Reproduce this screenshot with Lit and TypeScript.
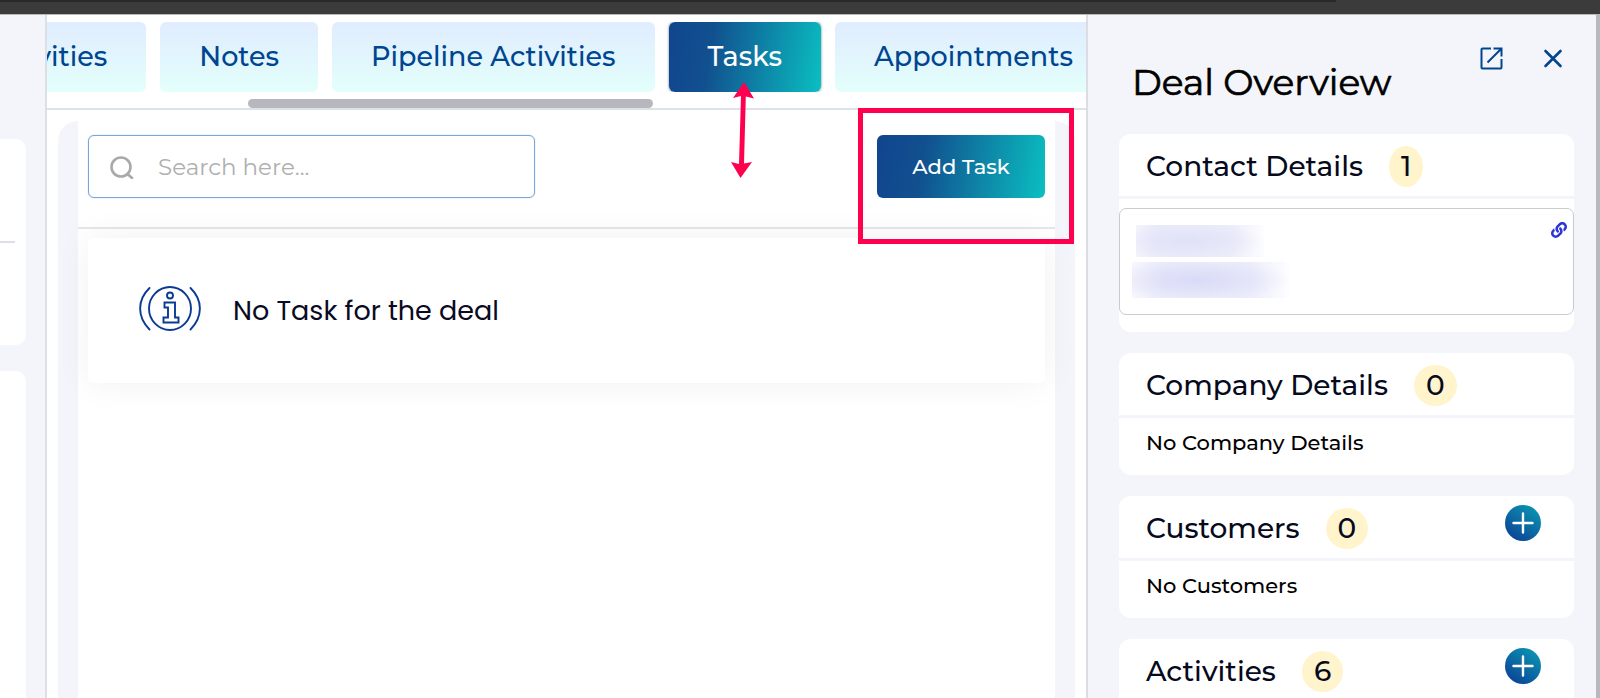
import { LitElement, html, css, svg, nothing } from "lit";
import { customElement, property, query } from "lit/decorators.js";
import { classMap } from "lit/directives/class-map.js";

const plusIcon = svg`<path d="M18 8.5v19M8.5 18h19" fill="none" stroke="#fff" stroke-width="2.4" stroke-linecap="round"/>`;

const chainHalf =
  "M326.612 185.391c59.747 59.809 58.927 155.698.36 214.59-.11.12-.24.25-.36.37l-67.2 67.2c-59.27 59.27-155.699 59.262-214.96 0-59.27-59.26-59.27-155.7 0-214.96l37.106-37.106c9.84-9.84 26.786-3.3 27.294 10.606.648 17.722 3.826 35.527 9.69 52.721 1.986 5.822.567 12.262-3.783 16.612l-13.087 13.087c-28.026 28.026-28.905 73.66-1.155 101.96 28.024 28.579 74.086 28.749 102.325.51l67.2-67.19c28.191-28.191 28.073-73.757 0-101.83-3.701-3.694-7.429-6.564-10.341-8.569a16.037 16.037 0 0 1-6.947-12.606c-.396-10.567 3.348-21.456 11.698-29.806l21.054-21.055c5.521-5.521 14.182-6.199 20.584-1.731a152.482 152.482 0 0 1 20.522 17.197z";

@customElement("deal-tabs")
class DealTabs extends LitElement {
  @property({ attribute: false }) tabs: string[] = [];
  @property() active = "";
  @query(".strip") strip!: HTMLElement;

  static styles = css`
    :host {
      display: block;
      border-bottom: 2px solid #dde1e8;
      padding-top: 7px;
    }
    .strip {
      display: flex;
      gap: 14px;
      overflow: hidden;
    }
    .tab {
      flex: none;
      height: 70px;
      padding: 0 39px;
      border: 0;
      border-radius: 6px;
      background: linear-gradient(#e0ecff, #e3fffb);
      color: #004590;
      font: 500 27px/32px Montserrat, Inter, sans-serif;
    }
    .active {
      background: linear-gradient(100deg, #11458f 0%, #11508f 28%, #0abfc1 100%);
      color: #fff;
      box-shadow: 0 0 2px 1px rgba(60, 80, 90, 0.35);
    }
    .track {
      padding-top: 7px;
    }
    .thumb {
      height: 9px;
      width: 39%;
      margin-left: 19.3%;
      border-radius: 5px;
      background: #b8b7be;
    }
  `;

  firstUpdated() {
    const second = this.strip.children[1] as HTMLElement;
    this.strip.scrollLeft = second.offsetLeft - this.strip.offsetLeft - 113;
  }

  render() {
    return html`
      <div class="strip" role="tablist">
        ${this.tabs.map(
          (t) => html`<button
            role="tab"
            aria-selected=${t === this.active}
            class=${classMap({ tab: true, active: t === this.active })}
          >${t}</button>`
        )}
      </div>
      <div class="track"><div class="thumb"></div></div>
    `;
  }
}

@customElement("detail-card")
class DetailCard extends LitElement {
  @property() heading = "";
  @property({ type: Number }) count = 0;
  @property({ type: Boolean }) addable = false;

  static styles = css`
    :host {
      display: block;
      background: #fff;
      border-radius: 12px;
    }
    .head {
      display: flex;
      align-items: flex-start;
      padding: 9px 33px 9px 27px;
      border-bottom: 3px solid #f4f5fa;
    }
    .title {
      display: flex;
      flex: 1;
      gap: 26px;
      margin: 0;
      padding-top: 3px;
      color: #060a1c;
      font: 500 28px/41px Montserrat, Inter, sans-serif;
    }
    .count {
      padding: 0 12px;
      border-radius: 50%;
      background: #fff4cc;
    }
    .add {
      width: 36px;
      height: 36px;
      padding: 0;
      border: 0;
      border-radius: 50%;
      background: linear-gradient(35deg, #0c4396 10%, #0a8fb0 85%);
    }
    .add svg {
      display: block;
    }
  `;

  render() {
    return html`
      <div class="head">
        <h2 class="title">${this.heading}<span class="count">${this.count}</span></h2>
        ${this.addable
          ? html`<button class="add" aria-label="Add ${this.heading}">
              <svg width="36" height="36" viewBox="0 0 36 36">${plusIcon}</svg>
            </button>`
          : nothing}
      </div>
      <slot></slot>
    `;
  }
}

@customElement("app-root")
class AppRoot extends LitElement {
  static styles = css`
    :host {
      display: flex;
      flex-direction: column;
      position: relative;
      height: 100vh;
      overflow: hidden;
      background: #fff;
      color: #000;
      font-family: Montserrat, Inter, sans-serif;
    }
    * {
      box-sizing: border-box;
    }
    .chrome {
      flex: none;
      height: 15px;
      border-bottom: 1px solid #b9b9b9;
      background: linear-gradient(#292929, #292929) 0 0 / 83.5% 2px no-repeat,
        #3b3b3b;
    }
    .layout {
      flex: 1;
      min-height: 0;
      display: grid;
      grid-template-columns: 47px minmax(0, 1fr) 514px;
    }
    .left {
      display: flex;
      flex-direction: column;
      gap: 26px;
      padding: 124px 19px 0 0;
      background: #f4f5fa;
      border-right: 2px solid #dcdfe6;
    }
    .left-card {
      background: #fff;
      border-radius: 0 10px 10px 0;
      height: 206px;
      padding: 102px 11px 0 0;
    }
    .left-card.rest {
      flex: 1;
      height: auto;
      border-radius: 0 10px 0 0;
    }
    .rule {
      margin: 0;
      border: 0;
      border-top: 2px solid #dcdfe6;
    }
    .center {
      display: flex;
      flex-direction: column;
      min-width: 0;
    }
    .panel {
      flex: 1;
      margin: 11px 11px 0;
      padding: 0 20px;
      border-radius: 20px 20px 0 0;
      background: #f4f5fa;
    }
    .sheet {
      height: 100%;
      background: #fff;
    }
    .tools {
      display: flex;
      justify-content: space-between;
      padding: 14px 10px 29px;
      border-bottom: 2px solid #e6e6e9;
    }
    .search {
      display: flex;
      align-items: center;
      gap: 24px;
      width: 447px;
      height: 63px;
      padding: 0 21px;
      border: 1px solid #78a6d8;
      border-radius: 6px;
      box-shadow: 0 0 1px #78a6d8;
    }
    .search svg {
      flex: none;
    }
    .search input {
      flex: 1;
      min-width: 0;
      padding: 0;
      border: 0;
      outline: 0;
      background: none;
      font: 400 23px/28px Montserrat, Inter, sans-serif;
    }
    .search input::placeholder {
      color: #afafaf;
      opacity: 1;
    }
    .primary {
      width: 168px;
      border: 0;
      border-radius: 6px;
      background: linear-gradient(100deg, #11458f 0%, #11508f 28%, #0abfc1 100%);
      color: #fff;
      font: 500 21px/26px Montserrat, Inter, sans-serif;
    }
    .empty {
      display: flex;
      align-items: center;
      gap: 32px;
      height: 145px;
      margin: 9px 10px 0;
      padding: 0 51px;
      border-radius: 5px;
      background: #fff;
      box-shadow: 0 0 36px rgba(20, 10, 40, 0.06);
      color: #0a0a24;
      font: 400 27px/32px Poppins, Inter, sans-serif;
    }
    .right {
      display: flex;
      flex-direction: column;
      gap: 21px;
      min-height: 0;
      overflow: hidden;
      padding: 0 22px 0 31px;
      background: #f4f5fa;
      border-left: 2px solid #dcdde2;
      border-right: 4px solid #b9b9bd;
    }
    .top {
      flex: none;
      display: flex;
      align-items: flex-start;
      height: 98px;
      padding: 31px 9px 0 13px;
    }
    .heading {
      flex: 1;
      margin: 0;
      padding-top: 14px;
      font: 400 36px/44px Montserrat, Inter, sans-serif;
      -webkit-text-stroke: 0.7px #000;
    }
    .actions {
      display: flex;
      gap: 38px;
    }
    .icon {
      padding: 0;
      border: 0;
      background: none;
    }
    .icon svg {
      display: block;
    }
    detail-card {
      flex: none;
    }
    .note {
      margin: 0;
      padding: 12px 27px 19px;
      font: 500 21px/26px Montserrat, Inter, sans-serif;
    }
    .contact {
      display: flex;
      justify-content: space-between;
      align-items: flex-start;
      height: 107px;
      margin: 9px 0 0;
      padding: 13px 6px 0 12px;
      border: 1px solid #cbcbcb;
      border-radius: 7px;
    }
    .contact-wrap {
      padding-bottom: 17px;
    }
    .hidden-text {
      display: grid;
      gap: 5px;
      padding-top: 3px;
    }
    .smudge {
      height: 32px;
      width: 128px;
      margin-left: 4px;
      background: radial-gradient(60% 60% at 40% 50%, #dfe1f7, transparent),
        linear-gradient(90deg, #f4f4fc, #ebecfa 15%, #ecedfa 75%, #fdfdff);
    }
    .smudge.wide {
      height: 36px;
      width: 158px;
      margin-left: 0;
      background: radial-gradient(60% 60% at 40% 50%, #d9daf7, transparent),
        linear-gradient(90deg, #f8f8fd, #ebecfa 20%, #ecedfa 75%, #fefeff);
    }
    .marks {
      position: absolute;
      inset: 0;
      pointer-events: none;
    }
    .arrow {
      position: absolute;
      left: 730px;
      top: 81px;
    }
    .box {
      position: absolute;
      left: 858px;
      top: 108px;
      width: 216px;
      height: 136px;
      border: 5px solid #ff004f;
    }
  `;

  render() {
    return html`
      <div class="chrome"></div>
      <div class="layout">
        <aside class="left">
          <div class="left-card"><hr class="rule" /></div>
          <div class="left-card rest"></div>
        </aside>

        <main class="center">
          <deal-tabs
            .tabs=${["Activities", "Notes", "Pipeline Activities", "Tasks", "Appointments"]}
            active="Tasks"
          ></deal-tabs>
          <div class="panel">
            <div class="sheet">
              <div class="tools">
                <label class="search">
                  <svg width="24" height="24" viewBox="0 0 24 24" fill="none" stroke="#a9a9a9" stroke-width="2.6" stroke-linecap="round" aria-hidden="true">
                    <circle cx="11" cy="12" r="9.5" />
                    <path d="M17.5 19l4.500 4" />
                  </svg>
                  <input type="search" placeholder="Search here..." aria-label="Search" />
                </label>
                <button class="primary">Add Task</button>
              </div>
              <div class="empty">
                <svg width="62" height="50" viewBox="0 0 62 50" fill="none" stroke="#0b3a92" stroke-width="1.9" stroke-linecap="round" aria-hidden="true">
                  <ellipse cx="31" cy="22.500" rx="21" ry="21.500" />
                  <path d="M10.500 2C-2 14-2 31 10.500 43.500M51.500 2C64 14 64 31 51.500 43.500" />
                  <circle cx="31" cy="9.500" r="3" />
                  <path d="M25.500 16.500H36V31.500H39.500V36.500H24.500V31.500H29V21.500H25.500Z" />
                </svg>
                <span>No Task for the deal</span>
              </div>
            </div>
          </div>
        </main>

        <aside class="right">
          <header class="top">
            <h1 class="heading">Deal Overview</h1>
            <div class="actions">
              <button class="icon" aria-label="Open in new window">
                <svg width="24" height="24" viewBox="0 0 24 24" fill="none" stroke="#00458f" stroke-width="2">
                  <path d="M12 2.500H3.500a1 1 0 0 0-1 1V21.500a1 1 0 0 0 1 1H21.500a1 1 0 0 0 1-1V13" />
                  <path d="M14.500 2.500H22.500V10.500M22 3L8.500 16.500" />
                </svg>
              </button>
              <button class="icon" aria-label="Close">
                <svg width="24" height="24" viewBox="0 0 24 24" fill="none" stroke="#00458f" stroke-width="2.600" stroke-linecap="round">
                  <path d="M4.500 5L19.500 20M19.500 5L4.500 20" />
                </svg>
              </button>
            </div>
          </header>

          <detail-card heading="Contact Details" .count=${1}>
            <div class="contact-wrap">
              <div class="contact">
                <div class="hidden-text">
                  <div class="smudge"></div>
                  <div class="smudge wide"></div>
                </div>
                <button class="icon" aria-label="Copy link">
                  <svg width="16" height="16" viewBox="0 0 512 512" fill="#2b35d8">
                    <path d=${chainHalf} />
                    <path d=${chainHalf} transform="rotate(180 256 256)" />
                  </svg>
                </button>
              </div>
            </div>
          </detail-card>
          <detail-card heading="Company Details" .count=${0}>
            <p class="note">No Company Details</p>
          </detail-card>
          <detail-card heading="Customers" .count=${0} addable>
            <p class="note">No Customers</p>
          </detail-card>
          <detail-card heading="Activities" .count=${6} addable>
            <p class="note">&nbsp;</p>
          </detail-card>
        </aside>
      </div>

      <div class="marks">
        <svg class="arrow" width="26" height="98" viewBox="0 0 26 98" fill="#ff004f" aria-hidden="true">
          <path d="M14 1L24 17.500L15.800 15.500L14 82.500L22 81L10.500 97L1 81L9 83L11 15L3 17Z" />
        </svg>
        <div class="box"></div>
      </div>
    `;
  }
}
